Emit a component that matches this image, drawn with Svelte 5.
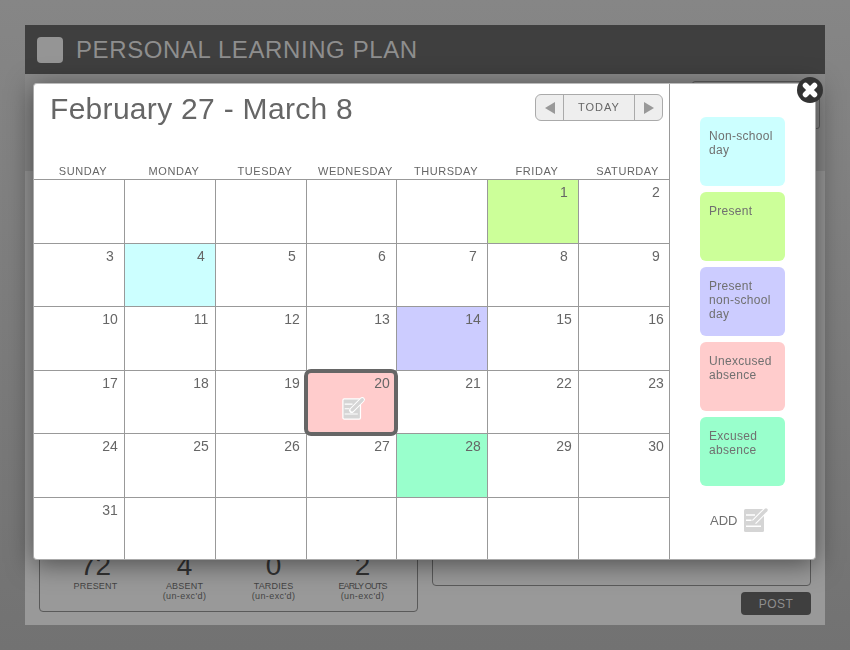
<script>
  const days = ['Sunday', 'Monday', 'Tuesday', 'Wednesday', 'Thursday', 'Friday', 'Saturday'];

  // five blank days before the 1st, then a 31 day month, then blanks to fill the row
  const cells = [
    ...Array(5).fill(null),
    ...Array.from({ length: 31 }, (_, i) => i + 1),
    ...Array(6).fill(null)
  ];

  const marks = { 1: 'present', 4: 'nonschool', 14: 'presentns', 20: 'unexcused', 28: 'excused' };

  const legend = [
    { key: 'nonschool', label: 'Non-school day' },
    { key: 'present', label: 'Present' },
    { key: 'presentns', label: 'Present non-school day' },
    { key: 'unexcused', label: 'Unexcused absence' },
    { key: 'excused', label: 'Excused absence' }
  ];

  const stats = [
    { n: 72, label: 'PRESENT' },
    { n: 4, label: 'ABSENT', sub: "(un-exc'd)" },
    { n: 0, label: 'TARDIES', sub: "(un-exc'd)" },
    { n: 2, label: 'EARLY OUTS', sub: "(un-exc'd)", tight: true }
  ];
</script>

{#snippet noteIcon(cls)}
  <svg class={cls} viewBox="0 0 25 26" aria-hidden="true">
    <rect class="sheet" x="1" y="2" width="20" height="23" rx="1.5" />
    <path class="cut" d="M3 8h9M3 13.2h5.5M3 19.2h15" />
    <path class="pen-halo" d="M11 15 23 3" />
    <path class="pen" d="M11.5 14.5 23 3" />
  </svg>
{/snippet}

<div class="page">
  <div class="shell">
    <header class="app-head">
      <span class="logo"></span>
      <h1>PERSONAL LEARNING PLAN</h1>
    </header>

    <div class="top-band">
      <div class="search-box"></div>
    </div>

    <div class="content">
      <div class="stats">
        {#each stats as s}
          <div class="stat">
            <strong>{s.n}</strong>
            <span class:tight={s.tight}>{s.label}</span>
            {#if s.sub}<span class="sub">{s.sub}</span>{/if}
          </div>
        {/each}
      </div>

      <div class="notes">
        <div class="note-box"></div>
        <button class="post">POST</button>
      </div>
    </div>
  </div>

  <div class="modal">
    <section class="calendar">
      <div class="cal-head">
        <h2>February 27 - March 8</h2>
        <div class="nav">
          <button class="arrow" aria-label="Previous"><i class="tri left"></i></button>
          <button class="today">TODAY</button>
          <button class="arrow" aria-label="Next"><i class="tri right"></i></button>
        </div>
      </div>

      <div class="weekdays">
        {#each days as d}
          <div>{d.toUpperCase()}</div>
        {/each}
      </div>

      <div class="grid">
        {#each cells as c, i}
          <div class="cell {c ? marks[c] ?? '' : ''}" class:end={i % 7 === 6} class:last={i >= 35}>
            {#if c}<span class="num">{c}</span>{/if}
            {#if c === 20}
              <div class="ring"></div>
              {@render noteIcon('cell-icon')}
            {/if}
          </div>
        {/each}
      </div>
    </section>

    <aside class="legend">
      {#each legend as l}
        <div class="chip {l.key}">{l.label}</div>
      {/each}
      <div class="add">
        <span>ADD</span>
        {@render noteIcon('add-icon')}
      </div>
    </aside>

    <button class="close" aria-label="Close">
      <svg viewBox="0 0 26 26"><path d="M8.5 8.5l9 9M17.5 8.5l-9 9" /></svg>
    </button>
  </div>
</div>

<style>
  :global(body) {
    margin: 0;
    font-family: "Liberation Sans", Arial, sans-serif;
  }

  .page {
    position: relative;
    width: 850px;
    height: 650px;
    box-sizing: border-box;
    padding: 25px;
    background: linear-gradient(#868686, #727272);
    overflow: hidden;
  }

  .shell {
    height: 600px;
    display: flex;
    flex-direction: column;
    background: #999;
  }

  .app-head {
    height: 49px;
    flex: none;
    display: flex;
    align-items: center;
    gap: 13px;
    padding: 0 12px;
    background: #3f3f3f;
  }

  .logo {
    width: 26px;
    height: 26px;
    border-radius: 4px;
    background: #959595;
  }

  h1 {
    margin: 0;
    font-size: 24px;
    font-weight: normal;
    letter-spacing: 0.6px;
    color: #8e8e8e;
  }

  .top-band {
    height: 97px;
    flex: none;
    box-sizing: border-box;
    padding: 7px 5px 0 0;
    display: flex;
    justify-content: flex-end;
    background: #8a8a8a;
  }

  .search-box {
    width: 126px;
    height: 46px;
    border: 1px solid #5c5c5c;
    border-radius: 3px;
  }

  .content {
    flex: 1;
    display: flex;
    align-items: flex-end;
    gap: 14px;
    padding: 0 14px 10px;
  }

  .stats {
    width: 379px;
    height: 90px;
    margin-bottom: 3px;
    box-sizing: border-box;
    display: grid;
    grid-template-columns: repeat(4, 89px);
    padding: 0 11px;
    border: 1px solid #5a5a5a;
    border-radius: 4px;
  }

  .stat {
    display: flex;
    flex-direction: column;
    align-items: center;
    padding-top: 27px;
    font-size: 9px;
    line-height: 10px;
    letter-spacing: 0.2px;
    color: #444;
    white-space: nowrap;
  }

  .stat strong {
    font-size: 28px;
    line-height: 32px;
    font-weight: normal;
    letter-spacing: 0;
    color: #333;
    margin-bottom: -1px;
  }

  .stat .sub {
    letter-spacing: 0.4px;
  }

  .stat .tight {
    letter-spacing: -0.8px;
  }

  .notes {
    width: 379px;
    display: flex;
    flex-direction: column;
    align-items: flex-end;
    gap: 6px;
  }

  .note-box {
    width: 100%;
    height: 60px;
    box-sizing: border-box;
    border: 1px solid #5a5a5a;
    border-radius: 4px;
  }

  .post {
    width: 70px;
    height: 23px;
    padding: 0;
    border: none;
    border-radius: 4px;
    background: #3f3f3f;
    color: #8e8e8e;
    font: 12px "Liberation Sans", Arial, sans-serif;
    letter-spacing: 0.5px;
  }

  .modal {
    position: absolute;
    left: 33px;
    top: 83px;
    width: 783px;
    height: 477px;
    box-sizing: border-box;
    display: flex;
    background: #fff;
    border: 1px solid #aaa;
    border-top-color: #bbb;
    border-radius: 4px;
    box-shadow: 0 4px 26px rgba(0, 0, 0, 0.5);
    will-change: transform;
  }

  .calendar {
    width: 635px;
    flex: none;
    display: flex;
    flex-direction: column;
    border-right: 1px solid #999;
  }

  .cal-head {
    height: 79px;
    display: flex;
    justify-content: space-between;
    align-items: flex-start;
    padding: 0 6px 0 16px;
  }

  h2 {
    margin: 7px 0 0;
    font-size: 30px;
    line-height: 36px;
    font-weight: normal;
    letter-spacing: 0.3px;
    color: #666;
  }

  .nav {
    margin-top: 10px;
    width: 128px;
    height: 27px;
    box-sizing: border-box;
    display: flex;
    background: #eee;
    border: 1px solid #aaa;
    border-radius: 6px;
  }

  .nav button {
    padding: 0;
    border: none;
    background: none;
    display: flex;
    align-items: center;
    justify-content: center;
  }

  .arrow {
    width: 27px;
    flex: none;
  }

  .nav .today {
    flex: 1;
    padding-bottom: 1px;
    border-left: 1px solid #aaa;
    border-right: 1px solid #aaa;
    font: 11px "Liberation Sans", Arial, sans-serif;
    letter-spacing: 1px;
    color: #666;
  }

  .tri {
    width: 0;
    height: 0;
    border-top: 6px solid transparent;
    border-bottom: 6px solid transparent;
  }

  .tri.left {
    border-right: 10px solid #999;
  }

  .tri.right {
    border-left: 10px solid #999;
  }

  .weekdays {
    height: 16px;
    display: grid;
    grid-template-columns: 91px 91px 91px 90px 91px 91px 90px;
    border-bottom: 1px solid #999;
    font-size: 11px;
    line-height: 16px;
    letter-spacing: 0.55px;
    color: #666;
    text-align: center;
  }

  .weekdays div {
    padding-left: 7px;
    box-sizing: border-box;
  }

  .grid {
    flex: 1;
    display: grid;
    grid-template-columns: 91px 91px 91px 90px 91px 91px 90px;
    grid-template-rows: repeat(5, 63.5px) 1fr;
  }

  .cell {
    position: relative;
    box-sizing: border-box;
    border-right: 1px solid #999;
    border-bottom: 1px solid #999;
    padding: 5px 4px 0 0;
    text-align: right;
    font-size: 14px;
    line-height: 15px;
    color: #666;
  }

  .cell.end {
    border-right: none;
    padding-right: 3px;
  }

  .cell.last {
    border-bottom: none;
  }

  /* one digit numbers sit centred over where two digits would be */
  .num {
    position: relative;
    z-index: 1;
    display: inline-block;
    width: 20px;
    text-align: center;
  }

  .ring {
    position: absolute;
    inset: -2px -2px -2.5px -3px;
    border: 4px solid #666;
    border-radius: 7px;
  }

  .nonschool { background: #ccffff; }
  .present { background: #ccff99; }
  .presentns { background: #ccccff; }
  .unexcused { background: #ffcccc; }
  .excused { background: #99ffcc; }

  svg .sheet {
    fill: #d5d5d5;
  }

  svg .cut {
    fill: none;
    stroke: #fff;
    stroke-width: 1.6;
  }

  svg .pen {
    fill: none;
    stroke: #d5d5d5;
    stroke-width: 3.4;
    stroke-linecap: round;
  }

  svg .pen-halo {
    fill: none;
    stroke: #fff;
    stroke-width: 5.5;
  }

  .cell-icon {
    position: absolute;
    left: 35px;
    top: 26px;
    width: 22px;
    height: 23px;
    overflow: visible;
  }

  .cell-icon .sheet {
    stroke: #fff;
    stroke-width: 1.4;
  }

  .cell-icon .cut {
    stroke-width: 1.2;
  }

  .cell-icon .pen {
    stroke-width: 3.8;
  }

  .cell-icon .pen-halo {
    stroke-width: 6;
    stroke-linecap: round;
  }

  .legend {
    flex: 1;
    display: flex;
    flex-direction: column;
    align-items: flex-start;
    gap: 6px;
    padding: 33px 0 0 30px;
  }

  .chip {
    width: 85px;
    height: 69px;
    box-sizing: border-box;
    padding: 12px 9px 0;
    border-radius: 6px;
    font-size: 12px;
    line-height: 14px;
    letter-spacing: 0.3px;
    color: #707070;
  }

  .add {
    display: flex;
    align-items: center;
    gap: 6px;
    margin: 15px 0 0 10px;
    font-size: 13px;
    color: #707070;
  }

  .add-icon {
    width: 25px;
    height: 26px;
  }

  .close {
    position: absolute;
    right: -8px;
    top: -7px;
    width: 26px;
    height: 26px;
    padding: 0;
    border: none;
    border-radius: 50%;
    background: #333;
  }

  .close svg {
    display: block;
  }

  .close path {
    fill: none;
    stroke: #fff;
    stroke-width: 5.5;
    stroke-linecap: round;
  }
</style>
